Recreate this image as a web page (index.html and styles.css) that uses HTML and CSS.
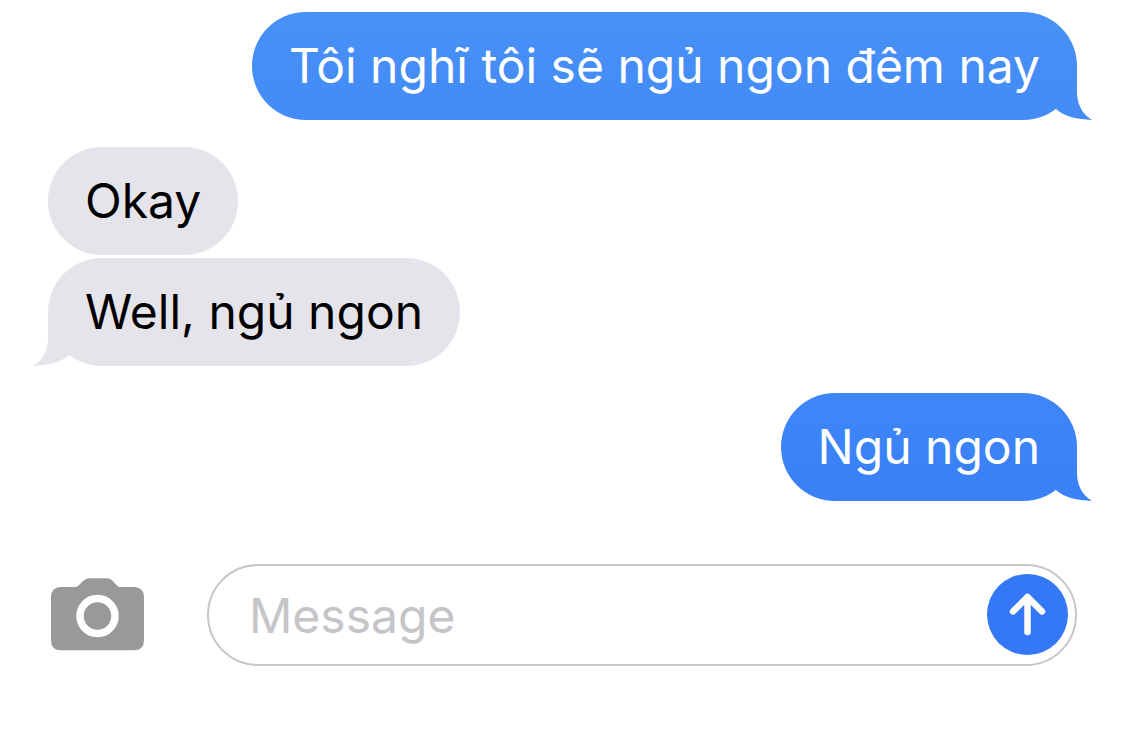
FILE: index.html
```html
<!DOCTYPE html>
<html lang="vi">
<head>
<meta charset="utf-8">
<meta name="viewport" content="width=device-width, initial-scale=1">
<title>Messages</title>
<link rel="stylesheet" href="styles.css">
</head>
<body>
<main class="chat">
  <section class="thread" aria-label="Conversation">
    <div class="group group-sent">
      <p class="bubble sent sent-light tail">Tôi nghĩ tôi sẽ ngủ ngon đêm nay</p>
    </div>
    <div class="group group-received">
      <p class="bubble received">Okay</p>
      <p class="bubble received tail">Well, ngủ ngon</p>
    </div>
    <div class="group group-sent">
      <p class="bubble sent tail">Ngủ ngon</p>
    </div>
  </section>
  <form class="composer">
    <button class="camera" type="button" aria-label="Camera">
      <svg viewBox="0 0 93 74" width="93" height="74" aria-hidden="true">
        <path fill="#999" d="M10 9H24Q26 9 27.500 7.500L32 3Q35 0.300 38 0.300H56Q59 0.300 61.500 2.700L66 7.500Q67.500 9 69 9H83Q93 9.500 93 19V62Q93 72.300 83 72.300H10Q0 72.300 0 62V19Q0 9.500 10 9Z"/>
        <circle cx="46.500" cy="38" r="17.500" fill="none" stroke="#fff" stroke-width="7.500"/>
      </svg>
    </button>
    <div class="field">
      <input class="field-input" type="text" placeholder="Message" aria-label="Message">
      <button class="send" type="submit" aria-label="Send">
        <svg viewBox="0 0 81 81" width="81" height="81" aria-hidden="true">
          <path fill="none" stroke="#fff" stroke-width="6.500" stroke-linecap="round" stroke-linejoin="round" d="M40.500 58V23M26 37.500L40.500 23L55 37.500"/>
        </svg>
      </button>
    </div>
  </form>
</main>
</body>
</html>
```
FILE: styles.css
```css
* {
  box-sizing: border-box;
}

body {
  margin: 0;
  background: #fff;
  color: #000;
  font-family: Inter, "Noto Sans", sans-serif;
  font-size: 48px;
  line-height: 60px;
}

.chat {
  padding: 12px 48px;
}

.thread {
  display: flex;
  flex-direction: column;
  gap: 27px;
}

.group {
  display: flex;
  flex-direction: column;
  gap: 3px;
}

.group-sent {
  align-items: flex-end;
}

.group-received {
  align-items: flex-start;
}

.bubble {
  position: relative;
  margin: 0;
  padding: 24px 37px;
  border-radius: 54px;
}

.received {
  background: #e5e4ea;
}

.sent {
  background: linear-gradient(#3e86f8, #3a80f6);
  color: #fff;
}

.sent-light {
  background: linear-gradient(#4891f6, #448bf6);
}

/* The tail continues the bubble's own fill past its bottom corner. */
.tail::after {
  content: "";
  position: absolute;
  right: -15px;
  bottom: 0;
  width: 45px;
  height: 108px;
  background: inherit;
  clip-path: path("M20 70L30 54V80C30 92 35 102 45 108C30 107 18 105 9 97Z");
}

.received.tail::after {
  right: auto;
  left: -15px;
  transform: scaleX(-1);
}

.composer {
  display: flex;
  align-items: center;
  gap: 60px;
  margin-top: 63px;
}

.camera,
.send {
  flex: none;
  padding: 0;
  border: 0;
  background: none;
  cursor: pointer;
}

.camera {
  padding: 0 0 0 3px;
}

.camera svg,
.send svg {
  display: block;
}

.field {
  display: flex;
  flex: 1;
  align-items: flex-start;
  min-width: 0;
  margin-left: 3px;
  padding: 8px 7px 8px 40px;
  border: 2px solid #c6c6c8;
  border-radius: 51px;
}

.field-input {
  flex: 1;
  min-width: 0;
  height: 82px;
  padding: 0;
  border: 0;
  outline: 0;
  background: transparent;
  color: #000;
  font: inherit;
}

.field-input::placeholder {
  color: #c5c5c7;
  opacity: 1;
}

.send {
  border-radius: 50%;
  background: #3578f6;
}
```
